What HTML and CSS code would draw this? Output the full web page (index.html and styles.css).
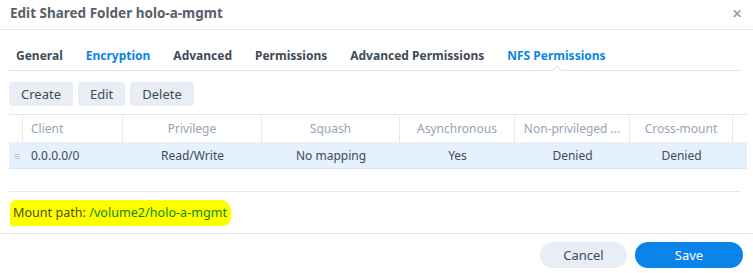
FILE: index.html
```html
<!DOCTYPE html>
<html lang="en">
<head>
    <meta charset="UTF-8">
    <meta name="viewport" content="width=device-width, initial-scale=1.0">
    <title>Edit Shared Folder holo-a-mgmt</title>
    <link rel="stylesheet" href="styles.css">
</head>
<body>
    <div class="window">
        <div class="title-bar">
            <span class="title">Edit Shared Folder holo-a-mgmt</span>
            <span class="close">&#10005;</span>
        </div>

        <div class="tabs">
            <span class="tab">General</span>
            <span class="tab link">Encryption</span>
            <span class="tab">Advanced</span>
            <span class="tab">Permissions</span>
            <span class="tab">Advanced Permissions</span>
            <span class="tab active">NFS Permissions</span>
        </div>

        <div class="toolbar">
            <button class="tool-btn">Create</button>
            <button class="tool-btn">Edit</button>
            <button class="tool-btn">Delete</button>
        </div>

        <div class="grid">
            <div class="grid-row grid-head">
                <div class="cell handle"></div>
                <div class="cell c-client left">Client</div>
                <div class="cell c-priv">Privilege</div>
                <div class="cell c-squash">Squash</div>
                <div class="cell c-async">Asynchronous</div>
                <div class="cell c-nonpriv">Non-privileged ...</div>
                <div class="cell c-cross">Cross-mount</div>
                <div class="cell c-rest"></div>
            </div>
            <div class="grid-row grid-data">
                <div class="cell handle">&#8801;</div>
                <div class="cell c-client left">0.0.0.0/0</div>
                <div class="cell c-priv">Read/Write</div>
                <div class="cell c-squash">No mapping</div>
                <div class="cell c-async">Yes</div>
                <div class="cell c-nonpriv">Denied</div>
                <div class="cell c-cross">Denied</div>
                <div class="cell c-rest"></div>
            </div>
        </div>

        <div class="mount">
            <span class="highlight">
                <span class="mount-label">Mount path:</span>
                <span class="mount-value">/volume2/holo-a-mgmt</span>
            </span>
        </div>

        <div class="footer">
            <button class="pill cancel">Cancel</button>
            <button class="pill save">Save</button>
        </div>
    </div>
</body>
</html>
```

FILE: styles.css
```css
body {
    margin: 0;
    font-family: "Noto Sans", "Open Sans", sans-serif;
    font-size: 12px;
    color: #414b55;
    background: #fff;
}
.window {
    width: 753px;
    height: 273px;
    overflow: hidden;
}
.title-bar {
    height: 30px;
    display: flex;
    align-items: center;
    justify-content: space-between;
    padding: 0 11px 0 10px;
    border-bottom: 1px solid #e3e7ec;
    box-sizing: border-box;
}
.title {
    font-size: 13.5px;
    font-weight: bold;
    color: #57606a;
    margin-top: -3px;
}
.close {
    color: #9aa0a6;
    font-size: 12px;
    font-weight: bold;
    margin-top: -3px;
}
.tabs {
    display: flex;
    gap: 23px;
    margin: 0 12px 0 9px;
    padding: 0 7px;
    height: 40px;
    align-items: flex-end;
    border-bottom: 1px solid #dde3e9;
}
.tab {
    position: relative;
    font-weight: bold;
    color: #414b55;
    padding-bottom: 6px;
}
.tab.link,
.tab.active {
    color: #0a84e8;
}
.tab.active::after {
    content: "";
    position: absolute;
    left: 50%;
    bottom: -5px;
    width: 7px;
    height: 7px;
    margin-left: -3px;
    background: #fff;
    border-top: 1px solid #dde3e9;
    border-left: 1px solid #dde3e9;
    transform: rotate(45deg);
}
.toolbar {
    display: flex;
    gap: 5px;
    padding: 11px 9px 0;
    height: 24px;
}
.tool-btn {
    font-family: inherit;
    font-size: 13px;
    color: #414b55;
    background: #e9eef4;
    border: none;
    border-radius: 3px;
    padding: 0 12px;
    height: 24px;
}
.grid {
    margin: 8px 6px 0 9px;
    border-top: 1px solid #e1e6eb;
}
.grid-row {
    display: flex;
    height: 26px;
}
.grid-head {
    height: 27px;
}
.grid-data {
    background: #e5f1fc;
    border-bottom: 1px solid #d7e3ef;
}
.cell {
    display: flex;
    align-items: center;
    justify-content: center;
    box-sizing: border-box;
    white-space: nowrap;
}
.grid-head .cell {
    color: #9aa3ad;
    border-right: 1px solid #e6eaee;
}
.grid-head .c-rest {
    border-right: none;
}
.cell.left {
    justify-content: flex-start;
    padding-left: 8px;
}
.handle {
    width: 14px;
    color: #b8c0c8;
    font-size: 11px;
    padding-left: 2px;
}
.c-client { width: 100px; }
.c-priv { width: 139px; }
.c-squash { width: 138px; }
.c-async { width: 115px; }
.c-nonpriv { width: 115px; }
.c-cross { width: 103px; }
.c-rest { flex: 1; }
.mount {
    margin: 22px 12px 0 9px;
    border-top: 1px solid #e6e9ed;
    height: 41px;
    display: flex;
    align-items: center;
}
.highlight {
    font-size: 12.6px;
    background: #ffff00;
    border-radius: 6px 10px 8px 3px;
    padding: 4px 4px 5px 3px;
    margin-left: 1px;
}
.mount-label {
    color: #4a4f10;
}
.mount-value {
    color: #0b8a0b;
}
.footer {
    border-top: 1px solid #e3e7ec;
    display: flex;
    justify-content: flex-end;
    gap: 8px;
    padding: 8px 10px 0;
}
.pill {
    font-family: inherit;
    font-size: 13px;
    height: 26px;
    border: none;
    border-radius: 13px;
}
.cancel {
    width: 87px;
    background: #e8eef5;
    color: #414b55;
}
.save {
    width: 108px;
    background: #0a84e8;
    color: #fff;
}
```
